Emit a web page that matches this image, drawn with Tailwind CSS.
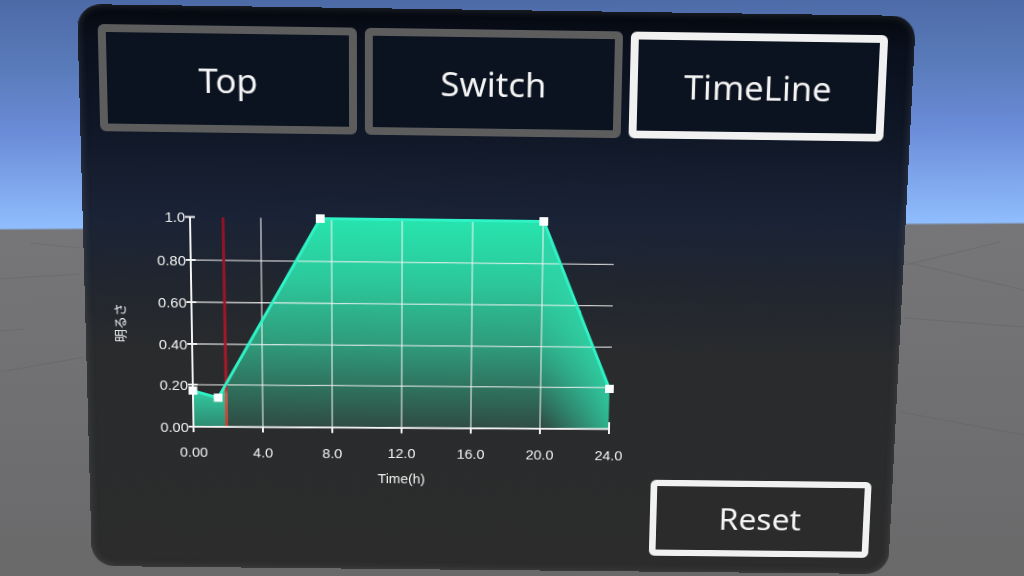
<!DOCTYPE html>
<html lang="ja">
<head>
<meta charset="utf-8">
<script src="https://cdn.jsdelivr.net/npm/@tailwindcss/browser@4"></script>
<title>TimeLine</title>
</head>
<body class="m-0 overflow-hidden">
<main class="relative w-[1024px] h-[576px] overflow-hidden bg-[linear-gradient(179.66deg,#4c6aa6_0%,#5a7bba_12%,#6b8cd8_23%,#8fbdfd_39.2%,#767679_39.6%,#727275_60%,#69696a_100%)]">
  <svg class="absolute inset-0" width="1024" height="576" viewBox="0 0 1024 576" fill="none">
    <path d="M0 279L80 274M0 372L85 357M0 331L25 329M30 243L80 248M905 262L1024 290M900 412L1024 435M905 318L1024 327M905 265L1000 242" stroke="#5d5d5f" stroke-width="1.2" opacity=".3"/>
  </svg>
  <section class="absolute left-0 top-0 w-[840px] h-[600px] origin-top-left [transform:matrix3d(1.00578,0.014407,0,0.000007608,0.033317,0.98784,0,0.000090408,0,0,1,0,77,4,0,1)] rounded-[24px] flex flex-col bg-[linear-gradient(to_bottom,#05080f_0%,#0a101d_6%,#0e1524_18%,#1a2336_36%,#21262f_48%,#292b2d_60%,#2c2c2c_100%)] shadow-[inset_0_0_8px_rgba(120,120,125,0.35)] font-['Noto_Sans',sans-serif] text-[#f4f4f4]">
    <nav class="flex gap-2 px-5 pt-5">
      <button class="w-[259px] h-[110px] rounded-md border-[8px] border-[#5d5d5d] bg-[#0c1320] text-[35px] leading-none">Top</button>
      <button class="w-[259px] h-[110px] rounded-md border-[8px] border-[#5d5d5d] bg-[#0c1320] text-[35px] leading-none">Switch</button>
      <button class="w-[259px] h-[110px] rounded-md border-[8px] border-[#f1f1f1] bg-[#0c1320] text-[35px] leading-none">TimeLine</button>
    </nav>
    <div class="flex flex-1 justify-between pl-5 pr-[22px] pb-[18px]">
      <svg class="self-start mt-[70px]" width="560" height="312" viewBox="0 0 560 312" fill="none">
        <defs>
          <linearGradient id="main" gradientUnits="userSpaceOnUse" x1="0" y1="18" x2="0" y2="244">
            <stop offset="0" stop-color="#27e4ae"/>
            <stop offset=".3" stop-color="#2cc79a"/>
            <stop offset=".6" stop-color="#2f9a7a"/>
            <stop offset="1" stop-color="#2f4a42"/>
          </linearGradient>
          <linearGradient id="right" gradientUnits="userSpaceOnUse" x1="449" y1="230" x2="521" y2="205">
            <stop offset="0" stop-color="#2fd6a8" stop-opacity="0"/>
            <stop offset="1" stop-color="#2fd6a8" stop-opacity=".85"/>
          </linearGradient>
          <linearGradient id="left" gradientUnits="userSpaceOnUse" x1="0" y1="200" x2="0" y2="244">
            <stop offset="0" stop-color="#33d2a7"/>
            <stop offset="1" stop-color="#2d8a70"/>
          </linearGradient>
          <linearGradient id="red" gradientUnits="userSpaceOnUse" x1="0" y1="18" x2="0" y2="244">
            <stop offset="0" stop-color="#8f1226"/>
            <stop offset=".8" stop-color="#ad1a28"/>
            <stop offset=".84" stop-color="#c9604c"/>
            <stop offset="1" stop-color="#c23a33"/>
          </linearGradient>
        </defs>
        <text transform="translate(15 132) rotate(-90)" text-anchor="middle" dominant-baseline="central" font-size="14" fill="#f4f4f4" font-family="'Noto Sans CJK JP',sans-serif">明るさ</text>

        <path d="M89 204.6L115 212L221.5 18.5L449.6 18.5L520.4 197.3V241.5L89 244Z" fill="url(#main)"/>
        <path d="M89 204.6L115 212L124 196V243.8L89 244Z" fill="url(#left)"/>
        <path d="M449.6 18.5L520.4 197.3V241.5L449.6 241.9Z" fill="url(#right)"/>

        <g stroke="#f4f4f4" stroke-opacity=".82" stroke-width="1.3">
          <path d="M89 64.2L522 63.4M89 109L522 107.6M89 154L522 152.2M89 198.1L521 196.2"/>
          <path d="M161 18.5V243.6M233 18.5V243.2M305 18.5V242.8M377 18.5V242.3M449 18.5V241.9"/>
        </g>
        <path d="M122.5 18.5L123.5 243.8" stroke="url(#red)" stroke-width="3"/>
        <path d="M89 204.6L115 212L221.5 18.5L449.6 18.5L520.4 197.3" stroke="#2ff3c6" stroke-width="3" stroke-linejoin="round"/>
        <g stroke="#f4f4f4" stroke-width="2">
          <path d="M89 18.5V244L521 241.5"/>
          <path d="M84 18.5H94M84 64H94M84 109H94M84 154H94M84 198H94M84 244H94"/>
          <path d="M89 244V250M161 243.6V249.6M233 243.2V249.2M305 242.8V248.8M377 242.3V248.3M449 241.9V247.9M521 234V247"/>
        </g>
        <g fill="#fbfefd">
          <rect x="84.5" y="200" width="9" height="9"/>
          <rect x="110.5" y="207.5" width="9" height="9"/>
          <rect x="217" y="14" width="9" height="9"/>
          <rect x="445" y="14" width="9" height="9"/>
          <rect x="516" y="193" width="9" height="9"/>
        </g>
        <g font-family="'Liberation Sans',sans-serif" font-size="15" fill="#f2f2f2">
          <g text-anchor="end" dominant-baseline="central">
            <text x="84" y="18">1.0</text>
            <text x="84" y="64">0.80</text>
            <text x="84" y="109">0.60</text>
            <text x="84" y="154">0.40</text>
            <text x="84" y="198">0.20</text>
            <text x="84" y="244">0.00</text>
          </g>
          <g text-anchor="middle">
            <text x="89" y="277">0.00</text>
            <text x="161" y="277">4.0</text>
            <text x="233" y="277">8.0</text>
            <text x="305" y="276.5">12.0</text>
            <text x="377" y="276.5">16.0</text>
            <text x="449" y="276">20.0</text>
            <text x="521" y="276">24.0</text>
            <text x="305" y="304" font-size="14.5">Time(h)</text>
          </g>
        </g>
      </svg>
      <button class="self-end w-[232px] h-[85px] rounded-md border-[7px] border-[#f1f1f1] bg-[#2b2b2b] text-[33.5px] leading-none">Reset</button>
    </div>
  </section>
</main>
</body>
</html>
